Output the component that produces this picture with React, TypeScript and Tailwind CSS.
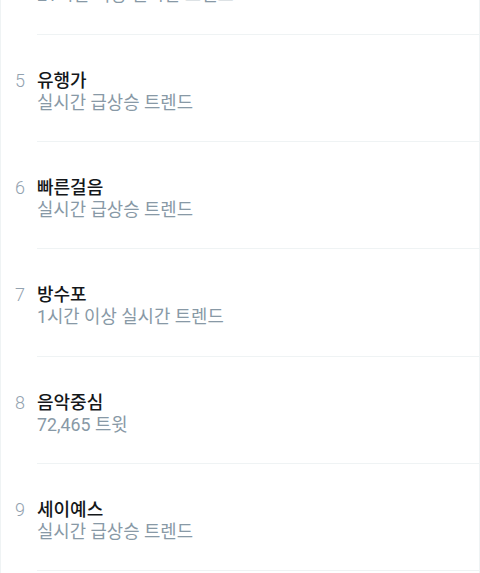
import React from 'react';

type Trend = {
  rank: number;
  title: string;
  meta: string;
};

const trends: Trend[] = [
  { rank: 4, title: '컴백', meta: '21시간 이상 실시간 트렌드' },
  { rank: 5, title: '유행가', meta: '실시간 급상승 트렌드' },
  { rank: 6, title: '빠른걸음', meta: '실시간 급상승 트렌드' },
  { rank: 7, title: '방수포', meta: '1시간 이상 실시간 트렌드' },
  { rank: 8, title: '음악중심', meta: '72,465 트윗' },
  { rank: 9, title: '세이예스', meta: '실시간 급상승 트렌드' },
];

const font = "font-['Roboto','Noto_Sans_CJK_KR',sans-serif]";

function TrendRow({ trend }: { trend: Trend }) {
  return (
    <div className="flex h-[107.4px]">
      <div className="w-[36px] shrink-0 pl-[14px] pt-[35px] text-[18px] leading-[22px] font-light text-[#93a2af]">
        {trend.rank}
      </div>
      <div className="flex-1 border-b border-[#eff3f4] pt-[35px]">
        <div className="text-[18px] leading-[22px] font-medium text-[#14171a]">{trend.title}</div>
        <div className="text-[17.8px] leading-[22px] text-[#8899a6]">{trend.meta}</div>
      </div>
    </div>
  );
}

export default function App() {
  return (
    <div className={`h-[573px] overflow-hidden bg-white border-x border-[#eff3f4] ${font}`}>
      <div className="-mt-[72.9px]">
        {trends.map(t => (
          <TrendRow key={t.rank} trend={t} />
        ))}
      </div>
    </div>
  );
}
